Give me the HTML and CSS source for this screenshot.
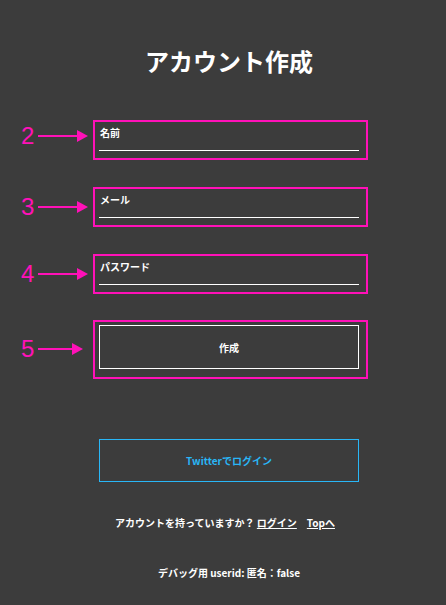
FILE: index.html
```html
<!DOCTYPE html>
<html lang="ja">
<head>
<meta charset="utf-8">
<title>アカウント作成</title>
<link rel="stylesheet" href="styles.css">
</head>
<body>
<main class="page">
  <h1 class="title">アカウント作成</h1>

  <div class="rows">
    <div class="row row-first">
      <div class="marker">
        <span class="num">2</span>
        <svg class="arrow" width="50" height="12" viewBox="0 0 50 12"><line x1="0" y1="6" x2="41" y2="6" stroke="#ff11b8" stroke-width="2"/><polygon points="39,0 50,6 39,12" fill="#ff11b8"/></svg>
      </div>
      <div class="box field">
        <label class="label">名前</label>
        <div class="input"></div>
      </div>
    </div>

    <div class="row">
      <div class="marker">
        <span class="num">3</span>
        <svg class="arrow" width="50" height="12" viewBox="0 0 50 12"><line x1="0" y1="6" x2="41" y2="6" stroke="#ff11b8" stroke-width="2"/><polygon points="39,0 50,6 39,12" fill="#ff11b8"/></svg>
      </div>
      <div class="box field">
        <label class="label">メール</label>
        <div class="input"></div>
      </div>
    </div>

    <div class="row">
      <div class="marker">
        <span class="num">4</span>
        <svg class="arrow" width="50" height="12" viewBox="0 0 50 12"><line x1="0" y1="6" x2="41" y2="6" stroke="#ff11b8" stroke-width="2"/><polygon points="39,0 50,6 39,12" fill="#ff11b8"/></svg>
      </div>
      <div class="box field">
        <label class="label">パスワード</label>
        <div class="input"></div>
      </div>
    </div>

    <div class="row row-submit">
      <div class="marker">
        <span class="num">5</span>
        <svg class="arrow" width="50" height="12" viewBox="0 0 50 12"><line x1="0" y1="6" x2="36" y2="6" stroke="#ff11b8" stroke-width="2"/><polygon points="34,0 45,6 34,12" fill="#ff11b8"/></svg>
      </div>
      <div class="box submit-box">
        <button class="btn-create">作成</button>
      </div>
    </div>
  </div>

  <button class="btn-twitter">Twitterでログイン</button>

  <p class="links">アカウントを持っていますか？ <a href="#" class="link">ログイン</a><a href="#" class="link link-top">Topへ</a></p>

  <p class="debug">デバッグ用 userid: 匿名：false</p>
</main>
</body>
</html>
```

FILE: styles.css
```css
html, body {
  margin: 0;
  padding: 0;
  background: #3c3c3c;
}

body {
  font-family: "Noto Sans CJK JP", "Noto Sans", sans-serif;
  color: #ffffff;
  width: 446px;
  height: 605px;
  overflow: hidden;
}

.page {
  padding-top: 45px;
}

.title {
  margin: 0 0 0 99px;
  width: 260px;
  text-align: center;
  font-size: 24px;
  line-height: 32px;
  font-weight: 700;
}

.rows {
  margin-top: 43px;
  display: flex;
  flex-direction: column;
  gap: 26px;
}

.row {
  display: flex;
  align-items: center;
  padding-left: 21px;
}

.row + .row {
  margin-top: 1px;
}

.row-submit {
  margin-top: 0 !important;
}

.marker {
  display: flex;
  align-items: center;
  gap: 5px;
  width: 72px;
}

.row-first .marker {
  margin-bottom: 9px;
}

.row-submit .marker {
  margin-bottom: 2px;
}

.num {
  width: 12px;
  font-family: "Liberation Sans", Arial, sans-serif;
  font-size: 24px;
  line-height: 24px;
  color: #ff11b8;
}

.arrow {
  display: block;
}

.box {
  width: 260px;
  border: 2px solid #ff11b8;
  padding: 4px 7px 7px 4px;
}

.field {
  display: flex;
  flex-direction: column;
}

.label {
  display: block;
  font-size: 10px;
  line-height: 14px;
  font-weight: 700;
  padding-left: 1px;
}

.input {
  height: 10px;
  border-bottom: 1px solid #ffffff;
}

.submit-box {
  padding-top: 3px;
  padding-bottom: 8px;
}

.btn-create {
  display: block;
  width: 260px;
  height: 44px;
  margin: 0;
  background: transparent;
  border: 1px solid #ffffff;
  color: #ffffff;
  font-family: "Noto Sans CJK JP", sans-serif;
  font-size: 10px;
  font-weight: 700;
  padding: 0;
}

.btn-twitter {
  display: block;
  margin: 60px 0 0 99px;
  width: 260px;
  height: 43px;
  background: transparent;
  border: 1px solid #29b6f6;
  color: #29b6f6;
  font-family: "Noto Sans CJK JP", sans-serif;
  font-size: 10px;
  font-weight: 700;
  padding: 0;
}

.links {
  margin: 34px 0 0 95px;
  width: 260px;
  text-align: center;
  font-size: 10px;
  line-height: 14px;
  font-weight: 700;
}

.link {
  color: #ffffff;
  text-decoration: underline;
}

.link-top {
  margin-left: 10px;
}

.debug {
  margin: 36px 0 0 99px;
  width: 260px;
  text-align: center;
  font-size: 10px;
  line-height: 14px;
  font-weight: 700;
}
```
